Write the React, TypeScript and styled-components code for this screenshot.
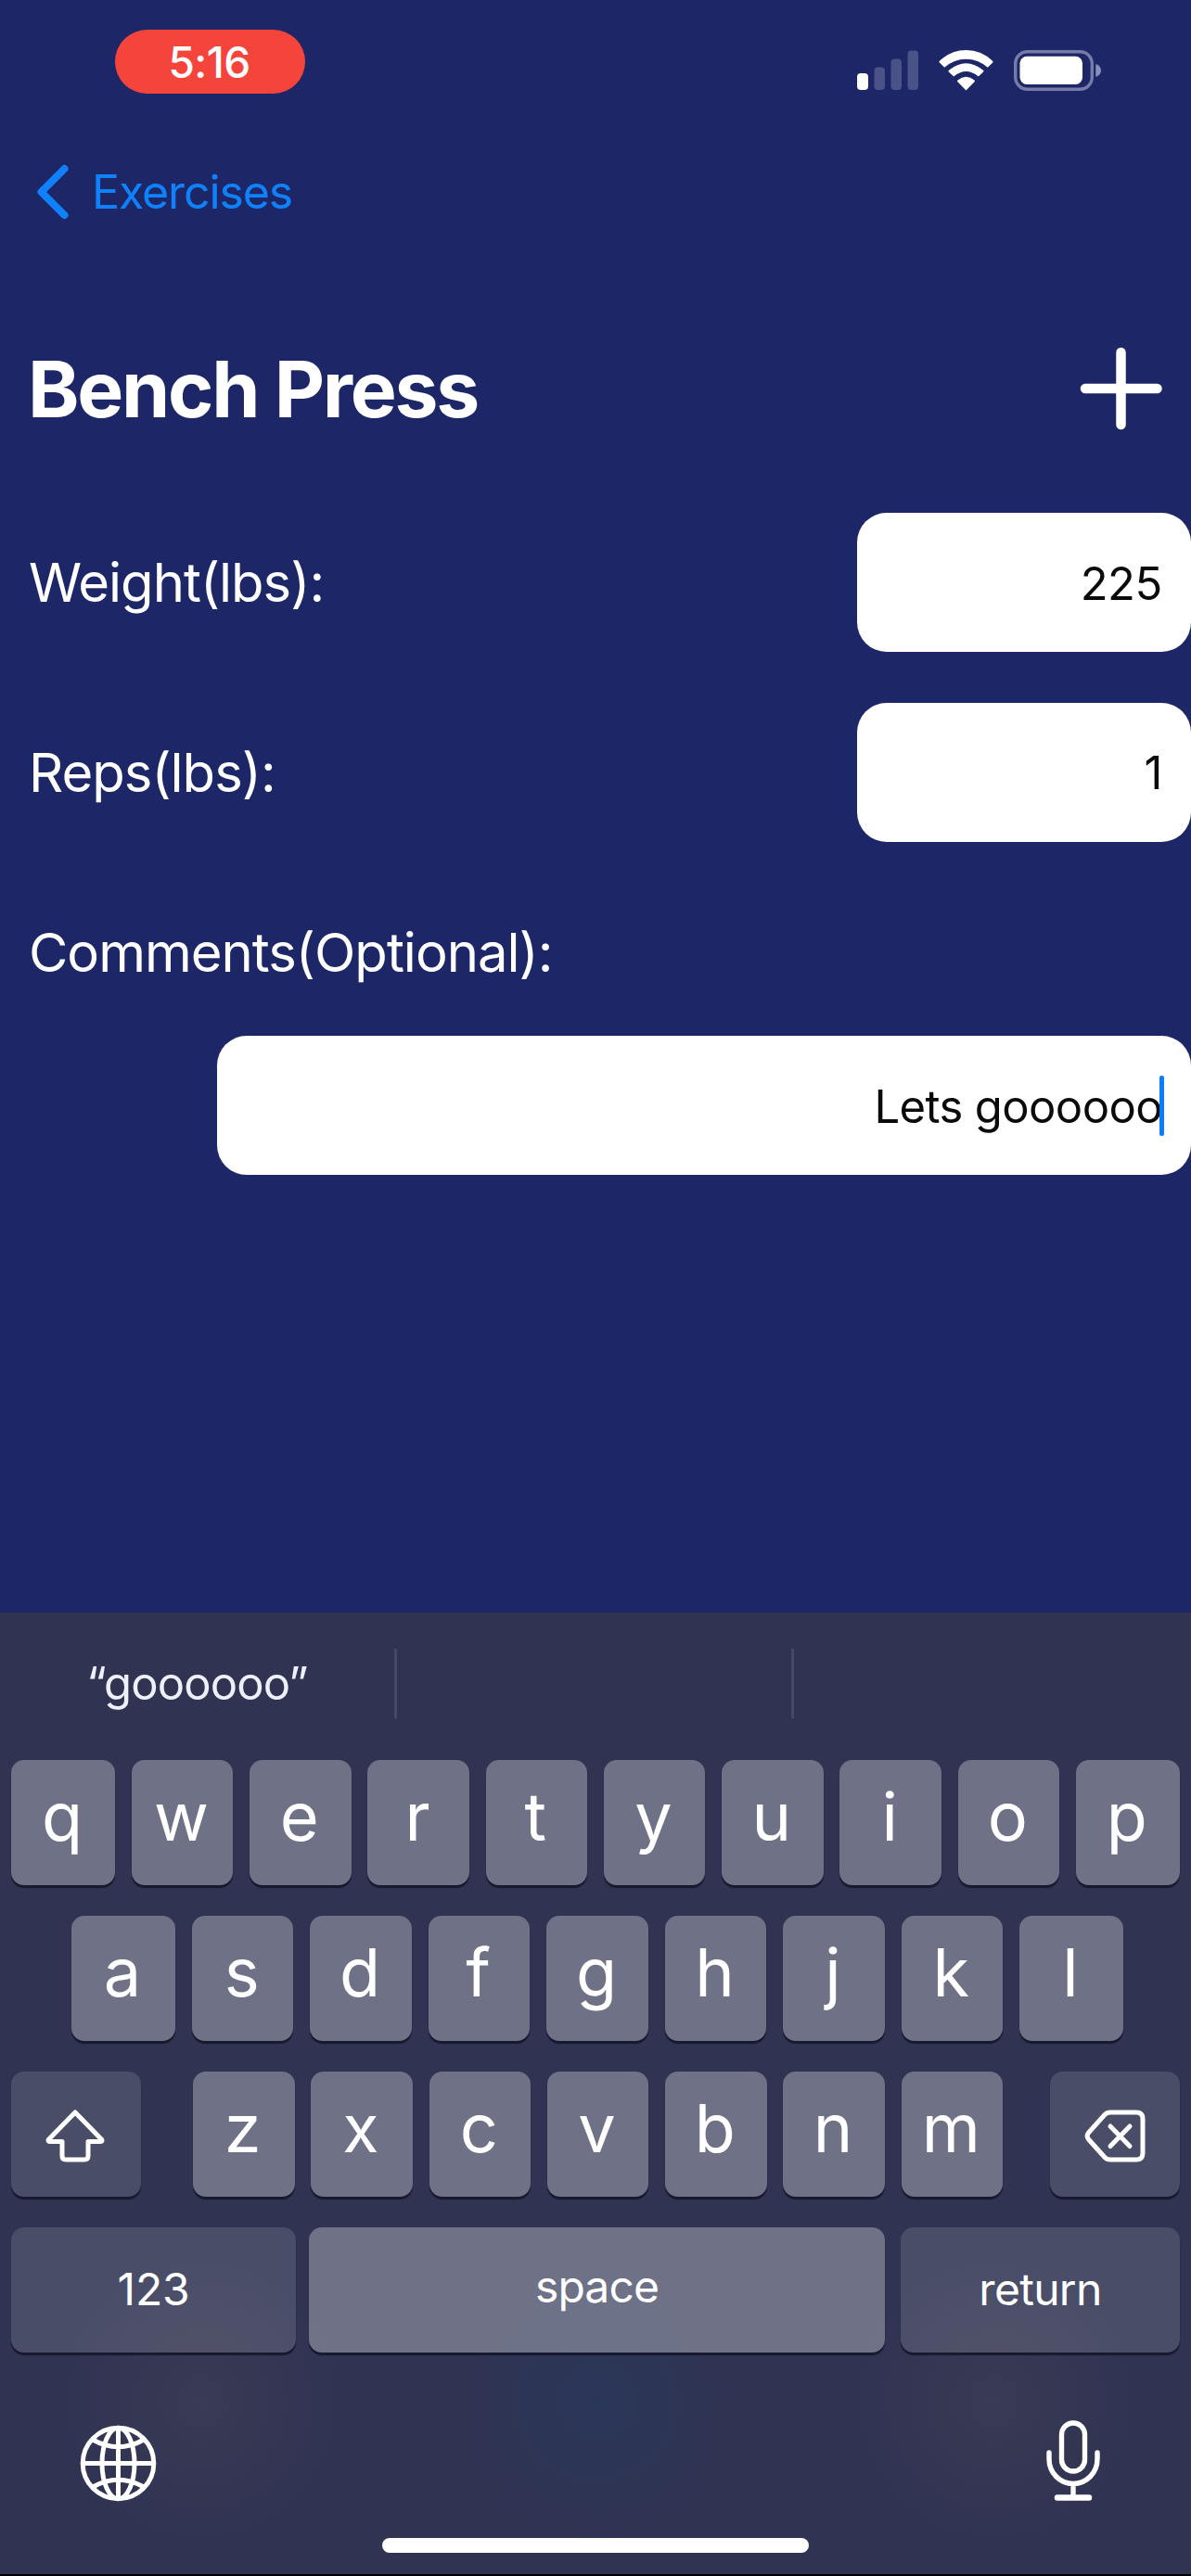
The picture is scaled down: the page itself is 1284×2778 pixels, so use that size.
import React from "react";
import styled, { createGlobalStyle } from "styled-components";

const Global = createGlobalStyle`
  * { box-sizing: border-box; }
  html, body { margin: 0; padding: 0; background: #1d2767; }
  svg { display: block; }
`;

const Screen = styled.div`
  width: 1284px;
  height: 2778px;
  display: flex;
  flex-direction: column;
  overflow: hidden;
  background: #1d2767;
  color: #fff;
  font-family: Inter, "Liberation Sans", sans-serif;
  font-kerning: normal;
`;

const StatusBar = styled.header`
  height: 150px;
  flex: none;
  padding: 32px 97px 0 124px;
  display: flex;
  justify-content: space-between;
  align-items: flex-start;
`;

const TimePill = styled.div`
  width: 205px;
  height: 69px;
  border-radius: 35px;
  background: #f5443c;
  display: flex;
  justify-content: center;
  align-items: center;
  padding-right: 2px;
  font-size: 46px;
  font-weight: 500;
  line-height: 1;
  letter-spacing: -0.6px;
`;

const StatusIcons = styled.div`
  display: flex;
  align-items: flex-start;
  gap: 22px;
  padding-top: 21px;
`;

const BackLink = styled.a`
  height: 114px;
  flex: none;
  padding-left: 37px;
  display: flex;
  align-items: center;
  gap: 23px;
  color: #0f82fb;
`;

const BackLabel = styled.span`
  font-size: 50px;
  line-height: 60px;
  letter-spacing: -1.1px;
`;

const TitleRow = styled.div`
  height: 286px;
  flex: none;
  padding: 24px 30px 0 30px;
  display: flex;
  justify-content: space-between;
  align-items: center;
`;

const Title = styled.h1`
  margin: 0;
  padding-top: 1px;
  font-size: 84px;
  line-height: 100px;
  font-weight: 700;
  letter-spacing: -2.3px;
`;

const Form = styled.main`
  flex: 1;
  display: flex;
  flex-direction: column;
  padding-top: 3px;
`;

const FieldRow = styled.label`
  display: flex;
  justify-content: space-between;
  align-items: center;
  height: 150px;
  margin-bottom: 54.5px;
  padding-left: 31px;
`;

const Caption = styled.span`
  font-size: 58px;
  line-height: 70px;
  letter-spacing: -1px;
`;

const CommentBlock = styled.div`
  display: flex;
  flex-direction: column;
  align-items: flex-start;
  padding: 30px 0 0 31px;
`;

const Field = styled.div<{ $width: number }>`
  width: ${(p) => p.$width}px;
  height: 150px;
  border-radius: 32px;
  background: #fff;
  color: #0a0a0a;
  display: flex;
  justify-content: flex-end;
  align-items: center;
  padding: 3px 31px 0 0;
  font-size: 49px;
  line-height: 60px;
  letter-spacing: -0.4px;
`;

const CommentField = styled(Field)`
  align-self: flex-end;
  margin-top: 55px;
  padding-top: 1px;
  letter-spacing: -0.6px;
`;

const CommentText = styled.span`
  padding-top: 3px;
`;

const Caret = styled.i`
  width: 5px;
  height: 65px;
  margin: 0 -2px 0 -3px;
  border-radius: 2px;
  background: #0a7dff;
`;

const Keyboard = styled.section`
  height: 1039px;
  flex: none;
  display: flex;
  flex-direction: column;
  border-bottom: 2px solid #000;
  background:
    radial-gradient(circle 150px at 217px 851px, rgba(62, 64, 85, 0.65), rgba(62, 64, 85, 0)),
    radial-gradient(circle 150px at 642px 851px, rgba(39, 56, 92, 0.65), rgba(39, 56, 92, 0)),
    radial-gradient(circle 150px at 1072px 851px, rgba(62, 64, 85, 0.65), rgba(62, 64, 85, 0)),
    #303352;
`;

const Suggestions = styled.div`
  height: 159px;
  flex: none;
  padding-top: 39px;
  display: grid;
  grid-template-columns: 425px 428px 1fr;
  align-items: start;
`;

const Suggestion = styled.div`
  height: 75px;
  display: flex;
  align-items: center;
  justify-content: center;
  font-size: 49px;
  color: #eef0fb;
  letter-spacing: -0.9px;

  & + & { border-left: 3px solid #454867; }
`;

const KeyRow = styled.div<{ $left: number; $right: number }>`
  height: 136px;
  flex: none;
  margin-bottom: 32px;
  padding: 0 ${(p) => p.$right}px 0 ${(p) => p.$left}px;
  display: flex;
  justify-content: space-between;
`;

const KeyGroup = styled.div`
  width: 873px;
  margin-left: 5px;
  display: flex;
  justify-content: space-between;
`;

const Key = styled.div<{ $w?: number; $dark?: boolean }>`
  width: ${(p) => p.$w ?? 109.5}px;
  height: 135px;
  border-radius: 14px;
  background: ${(p) => (p.$dark ? "rgba(255,255,255,0.13)" : "rgba(255,255,255,0.305)")};
  box-shadow: 0 3px 1px rgba(20, 20, 40, 0.85);
  display: flex;
  align-items: center;
  justify-content: center;

  svg { margin-top: 3px; }
`;

const SpaceKey = styled(Key)`
  margin-left: -3px;
`;

const Letter = styled.span`
  font-size: 72px;
  font-weight: 400;
  line-height: 86px;
  padding: 0 2px 14px 0;
`;

const Word = styled.span<{ $lift?: number; $track?: number }>`
  font-size: 48px;
  line-height: 58px;
  letter-spacing: ${(p) => p.$track ?? -0.9}px;
  padding-bottom: ${(p) => p.$lift ?? 1}px;
`;

const Dock = styled.div`
  flex: 1;
  display: flex;
  justify-content: space-between;
  align-items: flex-start;
  padding: 40px 98px 0 86px;
`;

const HomeBar = styled.div`
  width: 460px;
  height: 16px;
  border-radius: 8px;
  margin: 0 auto 23px;
  background: #fff;
`;

const GlobeButton = styled.div`
  padding-top: 5px;
`;

const Signal = () => (
  <svg width="66" height="44" viewBox="0 0 66 44">
    <rect x="0" y="26" width="12" height="18" rx="4" fill="#fff" />
    <rect x="18.5" y="19.5" width="11.5" height="24.5" rx="4" fill="#4b5287" />
    <rect x="36.5" y="10.5" width="11.5" height="33.5" rx="4" fill="#4b5287" />
    <rect x="54.5" y="1.5" width="11.5" height="42.5" rx="4" fill="#4b5287" />
  </svg>
);

const Wifi = () => (
  <svg width="59" height="45" viewBox="0 0 59 45" fill="#fff">
    <path d="M29.5 44.5 L20.2 35 Q19.8 34.2 20.5 33.4 Q29.5 26 38.5 33.4 Q39.2 34.2 38.8 35 Z" />
    <path d="M16.2 29.6 L10.8 24.4 Q10 23.6 10.9 22.8 Q29.5 7.8 48.1 22.8 Q49 23.6 48.2 24.4 L42.8 29.6 Q29.5 18.500 16.2 29.6 Z" />
    <path d="M6.2 19.8 L0.8 14.4 Q0.1 13.6 0.9 12.8 Q13 1 29.5 1 Q46 1 58.1 12.8 Q58.9 13.6 58.2 14.4 L52.8 19.8 Q42.5 10.800 29.5 10.800 Q16.5 10.800 6.2 19.800 Z" />
  </svg>
);

const Battery = () => (
  <svg width="94" height="45" viewBox="0 0 94 45">
    <rect x="1.7" y="2.7" width="82.6" height="40.6" rx="13" fill="none" stroke="#767ba8" strokeWidth="3.4" />
    <rect x="6.5" y="7.7" width="67.5" height="30.3" rx="7.5" fill="#fff" />
    <path d="M88.3 16 Q94 18 94 23 Q94 28 88.3 30 Z" fill="#8b90b8" />
  </svg>
);

const Chevron = () => (
  <svg width="39" height="62" viewBox="0 0 39 62" fill="none" stroke="#0f82fb" strokeWidth="8" strokeLinecap="round" strokeLinejoin="round">
    <path d="M32.5 6 L7.5 31 L32.5 56" />
  </svg>
);

const Plus = () => (
  <svg width="90" height="90" viewBox="0 0 90 90" stroke="#fff" strokeWidth="10.5" strokeLinecap="round">
    <path d="M6 45 H83.500 M44.500 6 V84" />
  </svg>
);

const Shift = () => (
  <svg width="66" height="57" viewBox="0 0 66 57" fill="none" stroke="#fff" strokeWidth="5" strokeLinejoin="round">
    <path d="M32 3 L60.8 32.5 Q61.5 34.500 59 34.500 H46 V50 Q46 54 42 54 H22 Q18 54 18 50 V34.500 H5 Q2.500 34.500 3.200 32.500 Z" />
  </svg>
);

const Backspace = () => (
  <svg width="66" height="57" viewBox="0 0 66 57" fill="none" stroke="#fff" strokeWidth="5" strokeLinejoin="round" strokeLinecap="round">
    <path d="M28 3 H56 Q63 3 63 10 V47 Q63 54 56 54 H28 Q24.500 54 22 51.500 L4.500 32 Q1.800 28.500 4.500 25 L22 5.500 Q24.500 3 28 3 Z" />
    <path d="M28 18 L49 39.500 M49 18 L28 39.500" />
  </svg>
);

const Globe = () => (
  <svg width="83" height="83" viewBox="0 0 83 83" fill="none" stroke="#fff" strokeWidth="5">
    <circle cx="41.5" cy="41.5" r="38.3" />
    <ellipse cx="41.5" cy="41.5" rx="17.5" ry="38.3" />
    <path d="M41.5 3 V80 M3 41.500 H80 M14 16 Q41.500 31.500 69 16 M14 67 Q41.500 51.500 69 67" />
  </svg>
);

const Mic = () => (
  <svg width="58" height="88" viewBox="0 0 58 88" fill="none" stroke="#fff" strokeWidth="5.4" strokeLinecap="round">
    <rect x="16.5" y="3" width="25" height="52" rx="12.5" />
    <path d="M3 35 V42 A26 26.5 0 0 0 55 42 V35 M29 69 V82" />
    <path d="M12 83.5 H46" strokeWidth="6.5" />
  </svg>
);

const Letters = ({ keys, edges = false }: { keys: string; edges?: boolean }) => (
  <>
    {keys.split("").map((k, i) => (
      <Key key={k} $w={edges && (i === 0 || i === keys.length - 1) ? 112 : 109.5}>
        <Letter>{k}</Letter>
      </Key>
    ))}
  </>
);

export default function App() {
  return (
    <Screen>
      <Global />
      <StatusBar>
        <TimePill>5:16</TimePill>
        <StatusIcons>
          <Signal />
          <Wifi />
          <Battery />
        </StatusIcons>
      </StatusBar>
      <BackLink>
        <Chevron />
        <BackLabel>Exercises</BackLabel>
      </BackLink>
      <TitleRow>
        <Title>Bench Press</Title>
        <Plus />
      </TitleRow>
      <Form>
        <FieldRow>
          <Caption>Weight(lbs):</Caption>
          <Field $width={360}>225</Field>
        </FieldRow>
        <FieldRow>
          <Caption>Reps(lbs):</Caption>
          <Field $width={360}>1</Field>
        </FieldRow>
        <CommentBlock>
          <Caption>Comments(Optional):</Caption>
          <CommentField $width={1050}>
            <CommentText>Lets goooooo</CommentText>
            <Caret />
          </CommentField>
        </CommentBlock>
      </Form>
      <Keyboard>
        <Suggestions>
          <Suggestion>“goooooo”</Suggestion>
          <Suggestion />
          <Suggestion />
        </Suggestions>
        <KeyRow $left={12} $right={12}>
          <Letters keys="qwertyuiop" edges />
        </KeyRow>
        <KeyRow $left={77} $right={73}>
          <Letters keys="asdfghjkl" edges />
        </KeyRow>
        <KeyRow $left={12} $right={12}>
          <Key $w={140} $dark><Shift /></Key>
          <KeyGroup>
            <Letters keys="zxcvbnm" />
          </KeyGroup>
          <Key $w={140} $dark><Backspace /></Key>
        </KeyRow>
        <KeyRow $left={12} $right={12}>
          <Key $w={307} $dark><Word $track={-0.2}>123</Word></Key>
          <SpaceKey $w={621}><Word $lift={8}>space</Word></SpaceKey>
          <Key $w={301} $dark><Word $track={-0.7}>return</Word></Key>
        </KeyRow>
        <Dock>
          <GlobeButton><Globe /></GlobeButton>
          <Mic />
        </Dock>
        <HomeBar />
      </Keyboard>
    </Screen>
  );
}
